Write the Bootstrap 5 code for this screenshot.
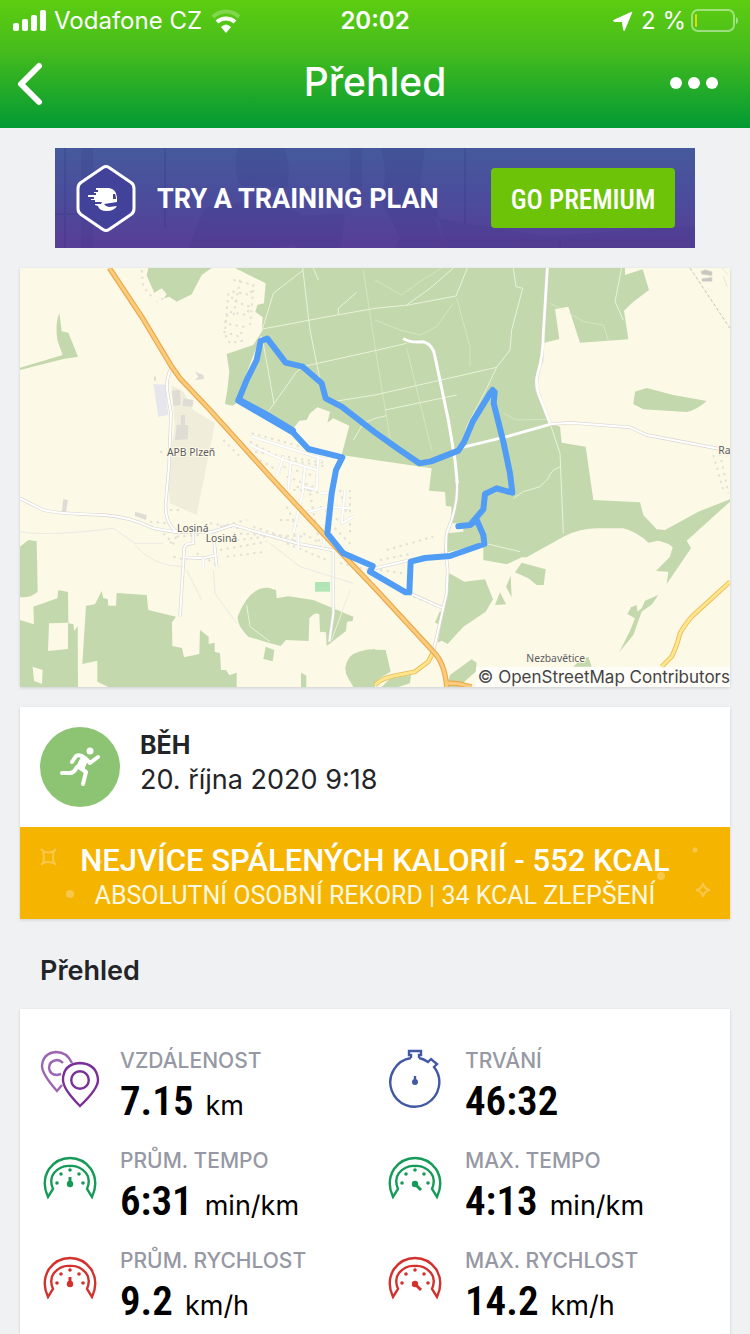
<!DOCTYPE html>
<html lang="cs">
<head>
<meta charset="utf-8">
<meta name="viewport" content="width=device-width, initial-scale=1">
<title>Přehled</title>
<link href="https://cdn.jsdelivr.net/npm/bootstrap@5.3.0/dist/css/bootstrap.min.css" rel="stylesheet">
<style>
  body { background: #f0f1f3; font-family: Inter, "Liberation Sans", sans-serif; color: #222427; }
  .app-top { background: linear-gradient(#5dcd10, #47bd1c 38%, #029a34); height: 128px; color: #fff; }
  .status { height: 42px; font-size: 24px; line-height: 42px; padding: 0 12px; }
  .status > * { flex: 1 1 0; }
  .status .clock { font-weight: 600; flex: 0 0 auto; }
  .title-bar { height: 84px; padding: 0 10px; }
  .title-bar h1 { font-size: 39px; font-weight: 500; line-height: 48px; padding-bottom: 4px; }
  .icon-btn { border: 0; background: none; padding: 0; width: 80px; height: 60px; color: #fff; }
  .content { padding: 20px; }
  .promo { width: 640px; max-width: 100%; height: 100px; padding: 0 20px; color: #fff; background: linear-gradient(#455a9c, #4b4c9c 50%, #583e96); }
  .promo-art, .record-art { top: 0; left: 0; }
  .promo-text { font: 700 27px/32px Roboto, sans-serif; margin-left: 20px; padding-top: 2px; }
  .promo-btn { background: #6cc307; color: #fff; border: 0; border-radius: 4px; width: 184px; height: 60px; padding: 4px 0 0; font: 500 27px/32px "Roboto Condensed", Roboto, sans-serif; }
  .promo-btn:hover { background: #5fae05; color: #fff; }
  .panel { background: #fff; box-shadow: 0 1px 3px rgba(0, 0, 0, .14); }
  .panel-gap { margin-top: 20px; }
  .credit { right: 0; bottom: 0; font-size: 17px; line-height: 20px; color: #444; background: rgba(255, 255, 255, .7); padding-left: 2px; }
  .place { font-family: "Noto Sans", sans-serif; font-size: 31px; fill: #5c5c64; stroke: #fcf9e6; stroke-width: 6px; paint-order: stroke; }
  .activity { padding: 20px; gap: 20px; }
  .sport { width: 80px; height: 80px; background: #8cc474; }
  .sport-name { font-size: 25px; line-height: 36px; font-weight: 700; }
  .sport-date { font-size: 27px; line-height: 34px; }
  .record { background: #f5b400; color: #fff; height: 92px; padding-top: 16px; font-family: Roboto, sans-serif; }
  .record-title { font-size: 31px; line-height: 36px; font-weight: 500; }
  .record-sub { font-size: 25px; line-height: 34px; color: #fff8e0; }
  .section-title { font-size: 27px; line-height: 32px; font-weight: 600; margin: 36px 20px 22px; }
  .stats { padding: 38px 0 0 20px; }
  .stat { height: 100px; gap: 20px; }
  .stat.pace { color: #159a58; }
  .stat.speed { color: #d2312d; }
  .stat dt { font-size: 21px; line-height: 28px; font-weight: 500; color: #9698a3; }
  .stat dd { font-size: 27px; line-height: 52px; color: #000; margin: 0; }
  .stat strong { font: 600 41px/52px "Roboto Condensed", Roboto, sans-serif; margin-right: 12px; }
</style>
</head>
<body>
<header class="app-top">
  <div class="status d-flex">
    <div class="d-flex align-items-center">
      <svg width="34" height="24" viewBox="0 0 34 24" fill="#fff" aria-hidden="true"><rect x="1" y="14" width="6" height="8" rx="2"/><rect x="10" y="10" width="6" height="12" rx="2"/><rect x="19" y="6" width="6" height="16" rx="2"/><rect x="28" y="1" width="6" height="21" rx="2"/></svg>
      <span class="ms-2">Vodafone CZ</span>
      <svg class="ms-2" width="32" height="26" viewBox="0 0 32 26" fill="none" stroke="#fff" aria-hidden="true"><path d="M3 9a18 18 0 0 1 26 0" stroke-width="4" opacity=".25"/><path d="M7 14a13 13 0 0 1 18 0" stroke-width="4"/><path d="M11 19q5-5 10 0l-5 6z" fill="#fff" stroke="none"/></svg>
    </div>
    <div class="clock">20:02</div>
    <div class="d-flex align-items-center justify-content-end">
      <svg width="20" height="20" viewBox="0 0 20 20" fill="#fff" aria-hidden="true"><path d="M18 1q2-1 1 1l-7 17q-1 2-2-.5L9 11 2 11q-4-1-.5-2.500z"/></svg>
      <span class="ms-2">2 %</span>
      <svg class="ms-1" width="48" height="26" viewBox="0 0 48 26" fill="none" overflow="visible" aria-hidden="true"><rect x="2" y="2" width="42" height="21" rx="6" stroke="#fff" stroke-width="2" opacity=".45"/><path d="M46 9v7q2-1 2-3.500t-2-3.500z" fill="#fff" opacity=".5"/><rect x="5" y="6" width="2" height="13" rx="1" fill="#e6d90b"/></svg>
    </div>
  </div>
  <div class="title-bar d-flex align-items-center justify-content-between">
    <button class="icon-btn text-start" type="button" aria-label="Zpět"><svg width="36" height="48" viewBox="0 0 36 48" fill="none" stroke="#fff" stroke-width="6" stroke-linecap="round" stroke-linejoin="round"><path d="M29 6 11 24 29 42"/></svg></button>
    <h1 class="m-0">Přehled</h1>
    <button class="icon-btn" type="button" aria-label="Další"><svg width="70" height="24" viewBox="0 0 70 24" fill="#fff"><circle cx="11" cy="10" r="6"/><circle cx="29" cy="10" r="6"/><circle cx="47" cy="10" r="6"/></svg></button>
  </div>
</header>

<main class="content">
  <div class="promo position-relative d-flex align-items-center mx-auto">
    <svg class="promo-art position-absolute w-100 h-100" viewBox="0 0 640 100" preserveAspectRatio="none" fill="#30307c" aria-hidden="true"><g opacity=".13"><path d="M26 0h12v100H26zM182 0q-4 30 5 38l45 2 2-20-4-20zM150 60l60-10 35 15 8 30-30 5h-90zM295 0h12v60h-12zM325 0q10 25 0 50l20 40-5 10h50l-10-50-15-15 5-35zM240 68l50-2-4 34h-46zM380 70l110 18 150-10v22H390z"/><path d="M10 0v100M110 0v80M410 0v75M505 90v10M0 66h75" fill="none" stroke="#1f1f60" stroke-width="2"/></g></svg>
    <svg class="position-relative" width="62" height="70" viewBox="0 0 62 70" fill="none" aria-hidden="true"><path d="M28 4.500q3-2 6 0l22 15q3 2 3 6v20q0 4-3 6l-22 15q-3 2-6 0l-22-15q-3-2-3-6v-20q0-4 3-6z" fill="#43429a" stroke="#fff" stroke-width="3"/><path d="M21 25h13q7 1 8 9v5l-13 2q2 3 5 3l8-1q-3 5-10 5-8 0-9-5l-3-1v-1h6l1-2h-7v-2h-4v-1h3v-2h-6v-2h8v-2h-2v-1h4v-2h-2zM38 31v5h3q0-3-1-5z" fill="#fff" fill-rule="evenodd"/></svg>
    <span class="promo-text position-relative">TRY A TRAINING PLAN</span>
    <button class="btn promo-btn position-relative ms-auto" type="button">GO PREMIUM</button>
  </div>

  <section class="panel panel-gap position-relative" id="map">
    <svg class="d-block w-100" viewBox="0 24 2130 1257" role="img" aria-label="Mapa trasy">
      <rect y="24" width="2130" height="1257" fill="#fcf9e6"/>
      <g fill="#c3d8ac">
        <path d="M645 24 737 70 732 130 712 135 706 155 728 172 725 215 700 255 620 282 628 335 622 390 615 432 638 437 655 425 820 505 838 482 860 480 870 460 892 442 930 455 922 488 940 475 988 497 965 585 1065 600 1235 625 1227 692 1275 696 1278 738 1295 740 1293 790 1330 790 1330 815 1280 820 1272 880 1390 850 1390 900 1460 913 1505 892 1520 892 1630 830Q1680 805 1735 805L1810 805Q1850 815 1885 848L1915 842Q1950 850 1958 862L1950 890 1908 933 1945 935 1940 972 2013 865 2000 842 2130 725V718L2035 755 1935 810 1910 808 1870 765 1860 727 1720 720 1697 560 1625 548 1620 500 1590 490 1550 370 1553 330 1567 250 1618 237 1605 148 1645 140 1680 248 1825 238 1812 152 1840 125 1887 90 1868 28 1815 45V24z"/>
        <path d="M385 24 380 45 390 70 403 98 425 85 440 102 432 115 448 110 470 125 515 103 545 45 575 24zM118 160Q105 190 112 240L128 285 0 323V330L130 297 174 290 145 218 125 214zM1845 395 1880 384 1960 405 2060 423Q2030 450 2000 456L1870 448 1840 432z"/>
        <g transform="translate(0 630)"><path d="M0 230 25 210 50 214 53 365Q30 385 0 381zM0 450 42 463 40 410 112 385 115 360 144 366 145 460 160 463 163 483 173 468 174 651H0zM87 460 84 543 144 537V458zM38 590 42 632 66 642 68 600z" fill-rule="evenodd"/><path d="M198 407 225 403 245 363 250 385 263 387 265 407H288L290 369 380 375 385 420 468 440 456 457 457 528 486 534 492 562 538 552 540 480 566 500V522L584 518V545L600 550 603 600 618 600 628 616 650 608V651H265L232 635V572L187 582zM655 435Q690 350 745 353L768 360 770 385 805 379 880 390 1000 440 998 453 981 455 978 483 920 528 918 487 900 485 898 433Q885 425 868 445L866 513 798 510 782 528 735 515 685 500Q645 460 655 435zM737 530 763 540 758 574 730 567zM843 608 859 617V651H843zM1065 537Q1010 540 990 560 965 595 985 625L1000 651H1065z"/></g>
        <g transform="translate(1065 630)"><path d="M0 539 32 540 47 605 15 625-20 651H70L105 640 108 615 45 625 20 651H0zM223 310 268 335 330 328 354 388 332 425 265 470 218 522 200 512 188 518 205 420zM195 422 200 430 190 462 180 458zM440 278 512 298 506 345 485 345 460 325 420 307zM407 318 410 382 393 350zM375 367 393 403 360 405zM850 375 832 402 800 425 775 495 733 546 765 482 780 445 757 432 768 412 785 405 787 425 800 415 810 392zM290 568 305 578 302 605 250 651H215L225 615zM595 590 610 575 640 560 650 590z"/></g>
      </g>
      <path d="M455 375 490 395 520 450 585 490 530 765 450 730 440 650 465 500z" fill="#f0eedb"/>
      <path d="M400 372 435 374 445 465 415 470z" fill="#e6e6ec"/>
      <path d="M525 335 550 345 552 357 525 360 535 350zM455 392 480 390 482 435 460 438zM490 415 520 420 518 440 488 438zM483 465H495V495H505L503 538 465 540 470 495H482zM402 350h6v12h-6zM565 450l20 8 4 10-15-5zM130 718 144 720 138 755 125 757zM345 755 380 765 378 780 345 768z" fill="#dfdcd5"/>
      <path d="M885 966h45v29h-45z" fill="#b2e5b5"/>
      <!-- village houses -->
      <g fill="none" stroke="#e3e0d6" stroke-width="6" stroke-dasharray="7 13">
        <path d="M640 60 700 75 690 105 640 95 635 120 690 140 680 165 625 155 615 190 670 200 660 230 610 215 630 250 680 240M625 100 615 210M660 60 640 170M700 90 690 195M365 30 370 80 395 110M430 115 410 125"/>
        <path d="M695 520 920 580M690 545 790 600M705 575 920 610M720 600 770 630M790 620 890 650M800 650 880 680M820 690 900 690M805 600 920 620M800 740 830 800M870 700 900 860M830 680 900 700M960 690 980 760M990 690V830M900 740 980 800M930 790 1000 860M850 820 900 850M800 850 920 900M960 910 1050 930M1000 900 1060 920M820 780 825 850"/>
        <path d="M430 820 470 860M450 850 500 800M470 830 540 825M530 880 600 920M600 870 740 845M620 890 740 875M600 800 680 780M640 820 850 830M650 840 740 830M700 800 850 850M570 790 690 810M450 750H480M460 890 500 900M780 780 810 780M390 785 440 790M610 540 660 590M420 575 440 580M1080 900 1180 880M1100 870 1240 830M1080 930 1150 940M1180 1010 1260 1040M2080 585 2110 690M2100 580 2125 700"/>
      </g>
      <!-- forest tracks -->
      <g fill="none" stroke="#eaf2da" stroke-width="3">
        <path d="M725 215 760 100 850 30M848 24 870 210 900 360M728 207 950 165 1065 145 1165 135 1308 108 1342 24M848 320 1065 272 1160 250M728 240 762 430M745 455 830 335 848 320M950 423 1065 405 1430 322M1000 540 1030 490 1065 475 1100 467M1095 450 1310 405M1480 24 1488 80 1508 85 1475 210 1470 270 1430 322 1400 385 1340 500 1325 560M955 165V145L1010 97M880 24 895 60M1160 135 1230 85 1300 24M1805 24 1785 125 1810 180M1590 490 1620 580 1630 820M1585 650 1600 630 1622 620M1480 715 1510 695 1560 680 1590 650M1395 850 1500 875M680 1035 690 1100 750 1145M990 990 935 1140"/>
        <path d="M1030 30 1065 260 1110 535M1160 265 1235 570M1310 115 1350 260 1350 320M1065 180 1140 210 1200 225 1250 200 1300 130M1450 460 1490 480 1590 478M1065 60 1145 105 1200 65 1265 24M1590 130 1630 150 1690 185 1750 195 1765 240" opacity=".5"/>
        <path d="M655 415 725 230" stroke="#fcf9e6" stroke-width="7"/>
      </g>
      <!-- local roads: casing, then surface -->
      <g fill="none" stroke="#d9d7d2" stroke-width="10" stroke-linejoin="round">
        <path d="M455 320Q435 360 443 400L453 460 447 620 437 730Q435 800 480 820M0 715 70 750Q100 760 250 765 330 770 400 805L470 817 580 815 640 795 690 810 830 850 945 872M580 820 590 920M520 810V850Q488 850 492 875L480 1070M495 892 550 895 590 885M940 872 940 1060 928 1145M1582 24 1570 220 1565 300Q1545 360 1550 390L1590 490M1590 493 1650 488 1830 502 1880 525 2100 567M1310 660Q1318 730 1280 820 1275 870 1283 930L1280 1000 1240 1175M1065 925 1170 900M1170 1000 1270 1045"/>
        <path d="M455 320Q435 360 443 400L453 460 447 620 437 730Q435 800 480 820M0 715 70 750Q100 760 250 765 330 770 400 805L470 817 580 815 640 795 690 810 830 850 945 872M580 820 590 920M520 810V850Q488 850 492 875L480 1070M495 892 550 895 590 885M940 872 940 1060 928 1145M1590 493 1650 488 1830 502 1880 525 2100 567M1310 660Q1318 730 1280 820 1275 870 1283 930L1280 1000 1240 1175M1065 925 1170 900M1170 1000 1270 1045" stroke="#fff" stroke-width="6"/>
        <path d="M695 530 920 600M690 555 790 600 890 630M790 590 770 650M812 610 805 690M855 620 848 690M895 580 890 690 850 680M850 690 820 820M848 760 925 740 990 745M975 690 965 790 1000 770M925 740 910 860M900 700 930 700M835 820v50M550 895v30" stroke="#e6e4de" stroke-width="9"/>
        <path d="M695 530 920 600M690 555 790 600 890 630M790 590 770 650M812 610 805 690M855 620 848 690M895 580 890 690 850 680M850 690 820 820M848 760 925 740 990 745M975 690 965 790 1000 770M925 740 910 860M900 700 930 700M835 820v50M550 895v30" stroke="#fff" stroke-width="6"/>
        <path d="M1150 235Q1170 250 1210 245 1240 255 1245 290L1285 480 1305 600 1312 670M1315 565 1460 530 1590 493" stroke="#fff" stroke-width="9"/>
        <path d="M1582 24 1570 220Q1570 290 1553 340 1545 370 1555 400L1590 490" stroke="#fff" stroke-width="8"/>
      </g>
      <path d="M0 815Q80 830 280 805L345 850 430 850M345 855Q400 920 490 920M500 930 545 1020M750 850 840 920 1000 970M580 930 585 1000 650 1090" fill="none" stroke="#ebeae4" stroke-width="3"/>
      <path d="M2010 24 2130 205" fill="none" stroke="#aaa9a2" stroke-width="2" stroke-dasharray="10 6"/>
      <path d="M2042 35l14-6 20 6v12l-30-4zM2046 56l30-4v12h-30zM2105 24l20 20M2110 50l12 30" fill="#c8c6c0" stroke="#dedbd3" stroke-width="2"/>
      <!-- main roads -->
      <g fill="none" stroke-linejoin="round">
        <path d="M1065 1275Q1085 1255 1120 1248L1185 1235 1225 1205 1240 1175M1925 1220 1955 1190Q1970 1160 1980 1120 1990 1100 2015 1070L2070 1020 2130 965" stroke="#e8bb55" stroke-width="14"/>
        <path d="M1065 1275Q1085 1255 1120 1248L1185 1235 1225 1205 1240 1175M1925 1220 1955 1190Q1970 1160 1980 1120 1990 1100 2015 1070L2070 1020 2130 965" stroke="#ffe58c" stroke-width="9"/>
        <path d="M268 24 365 170 455 320 480 355 570 450 755 655 850 757 960 875 1065 985 1240 1175Q1275 1210 1280 1281M1275 1268 1320 1272 1355 1281" stroke="#e9a94c" stroke-width="16"/>
        <path d="M268 24 365 170 455 320 480 355 570 450 755 655 850 757 960 875 1065 985 1240 1175Q1275 1210 1280 1281M1275 1268 1320 1272 1355 1281" stroke="#fdcb7c" stroke-width="9"/>
      </g>
      <!-- recorded run -->
      <path d="M742 236 797 308 848 320 905 370 917 415 965 440 1065 517 1135 567 1198 610 1233 604 1315 572 1333 545 1358 485 1410 400 1418 390 1424 396 1421 430 1450 545 1470 640 1477 698 1430 685 1395 702 1390 748 1350 795 1315 799 1350 795 1370 780 1390 825 1393 852 1290 888 1215 894 1172 905 1168 997H1157L1050 935 1058 918 970 880 922 820 935 700 948 630 967 592 865 567 820 518 655 422 680 360 710 300 722 243z" fill="none" stroke="#519cf5" stroke-width="18" stroke-linejoin="round" stroke-linecap="round"/>
      <path d="M657 420 740 465 818 512" fill="none" stroke="#519cf5" stroke-width="20" stroke-linecap="round"/>
      <g class="place"><text x="441" y="587">APB Plzeň</text><text x="471" y="816">Losiná</text><text x="557" y="846">Losiná</text><text x="1519" y="1206">Nezbavětice</text><text x="2095" y="583">Ra</text></g>
    </svg>
    <div class="credit position-absolute">© OpenStreetMap Contributors</div>
  </section>

  <section class="panel panel-gap">
    <div class="activity d-flex">
      <div class="sport rounded-circle d-flex align-items-center justify-content-center flex-shrink-0"><svg width="42" height="42" viewBox="0 0 42 42" fill="none" stroke="#fff" stroke-width="4" stroke-linecap="round" stroke-linejoin="round" aria-hidden="true"><circle cx="31" cy="5" r="3.500" fill="#fff" stroke="none"/><path d="M13 16 17 10Q21 8 26 12L20 21 27 26 24 38M26 12 31 17 39 11M18 21Q15 27 11 27H3"/><path d="M23 11 18 21 24 24 28 14z" fill="#fff" stroke-width="2"/></svg></div>
      <div>
        <div class="sport-name">BĚH</div>
        <div class="sport-date">20. října 2020 9:18</div>
      </div>
    </div>
    <div class="record position-relative text-center">
      <svg class="record-art position-absolute w-100 h-100" viewBox="0 0 710 92" fill="none" stroke="#f8c74c" stroke-width="2" aria-hidden="true"><path d="M23 24q5 3 11 0-2 6 0 12-6-2-11 0 2-6 0-12zM21 22l3 3M36 22l-3 3M21 38l3-3M36 38l-3-3M683 56q1 6 7 7-6 1-7 7-1-6-7-7 6-1 7-7z"/><g fill="#f8c74c" stroke="none"><circle cx="50" cy="67" r="4"/><circle cx="641" cy="49" r="4"/><circle cx="675" cy="23" r="2.500"/><circle cx="80" cy="35" r="2"/></g></svg>
      <div class="record-title position-relative">NEJVÍCE SPÁLENÝCH KALORIÍ - 552 KCAL</div>
      <div class="record-sub position-relative">ABSOLUTNÍ OSOBNÍ REKORD | 34 KCAL ZLEPŠENÍ</div>
    </div>
  </section>

  <h2 class="section-title">Přehled</h2>

  <section class="panel">
    <svg class="d-none" aria-hidden="true">
      <symbol id="gauge" viewBox="0 0 60 60"><path d="M8 50Q1 35 9 22 17 11 30 11T51 22Q59 35 52 50L47 42Q51 32 46 26 39 18 30 19 21 18 14 26 9 32 13 42z" fill="none" stroke="currentColor" stroke-width="2.400"/><g fill="currentColor"><circle cx="17" cy="36" r="1.800"/><circle cx="21" cy="27" r="1.800"/><circle cx="30" cy="23" r="1.800"/><circle cx="39" cy="27" r="1.800"/><circle cx="43" cy="36" r="1.800"/><circle cx="30" cy="37" r="3.200"/></g></symbol>
    </svg>
    <dl class="stats row row-cols-2 g-0 m-0">
      <div class="stat d-flex">
        <svg width="60" height="62" viewBox="0 0 60 62" fill="none" stroke-width="2.400" aria-hidden="true"><g stroke="#9d66b3"><path d="M32 16Q27 5 16 5 3 6 2 19 2 27 17 44L22 38"/><path d="M23 16Q20 13 17 13 9 14 9 21 10 28 17 28L21 27"/></g><g stroke="#7a3096"><path d="M40 16Q57 17 58 33 58 42 40 59 23 42 23 33 23 17 40 16z"/><circle cx="40" cy="33" r="8.800"/></g></svg>
        <div><dt>VZDÁLENOST</dt><dd><strong>7.15</strong>km</dd></div>
      </div>
      <div class="stat d-flex">
        <svg width="60" height="62" viewBox="0 0 60 62" fill="none" stroke="#4258a5" stroke-width="2.400" aria-hidden="true"><path d="M26 11V8H24V4H36V8H34V11M26 11A24.500 24.500 0 1 0 49 20L52 17 46 12 43 15A24.500 24.500 0 0 0 34 11"/><circle cx="30" cy="35" r="3" fill="#4258a5" stroke="none"/><path d="M30 35V29"/></svg>
        <div><dt>TRVÁNÍ</dt><dd><strong>46:32</strong></dd></div>
      </div>
      <div class="stat pace d-flex">
        <svg width="60" height="60" aria-hidden="true"><use href="#gauge"/><path d="M30 37v-7" stroke="currentColor" stroke-width="3"/></svg>
        <div><dt>PRŮM. TEMPO</dt><dd><strong>6:31</strong>min/km</dd></div>
      </div>
      <div class="stat pace d-flex">
        <svg width="60" height="60" aria-hidden="true"><use href="#gauge"/><path d="M30 37l6 6" stroke="currentColor" stroke-width="3"/></svg>
        <div><dt>MAX. TEMPO</dt><dd><strong>4:13</strong>min/km</dd></div>
      </div>
      <div class="stat speed d-flex">
        <svg width="60" height="60" aria-hidden="true"><use href="#gauge"/><path d="M30 37v-7" stroke="currentColor" stroke-width="3"/></svg>
        <div><dt>PRŮM. RYCHLOST</dt><dd><strong>9.2</strong>km/h</dd></div>
      </div>
      <div class="stat speed d-flex">
        <svg width="60" height="60" aria-hidden="true"><use href="#gauge"/><path d="M30 37l6 6" stroke="currentColor" stroke-width="3"/></svg>
        <div><dt>MAX. RYCHLOST</dt><dd><strong>14.2</strong>km/h</dd></div>
      </div>
    </dl>
  </section>
</main>
<script src="https://cdn.jsdelivr.net/npm/bootstrap@5.3.0/dist/js/bootstrap.bundle.min.js"></script>
</body>
</html>
